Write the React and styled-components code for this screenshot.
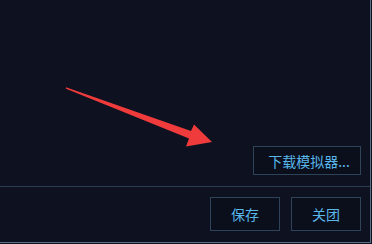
import React from "react";
import styled, { createGlobalStyle } from "styled-components";

const Global = createGlobalStyle`
  html, body { margin: 0; padding: 0; background: #0d1120; }
  #root { width: 372px; height: 244px; }
`;

const Frame = styled.div`
  position: relative;
  width: 371px;
  height: 243px;
  box-sizing: border-box;
  background: #0d1120;
  border-right: 1px solid #5b6d82;
  border-bottom: 1px solid #5b6d82;
  display: flex;
  flex-direction: column;
  font-family: "Noto Sans CJK SC", "Microsoft YaHei", sans-serif;
`;

const Body = styled.div`
  height: 187px;
  box-sizing: border-box;
  display: flex;
  align-items: flex-end;
  justify-content: flex-end;
  padding: 0 9px 11px 0;
  border-bottom: 1px solid #2a3a4f;
`;

const Footer = styled.div`
  flex: 1;
  display: flex;
  justify-content: flex-end;
  align-items: flex-start;
  gap: 11px;
  padding: 10px 9px 0 0;
`;

const Button = styled.button`
  box-sizing: border-box;
  width: ${(p) => p.$w}px;
  height: ${(p) => p.$h}px;
  background: #0b0f1c;
  border: 1px solid #2e4358;
  color: #58b6ea;
  font-family: "Noto Sans CJK SC", sans-serif;
  font-size: 14px;
  line-height: 1;
  padding: ${(p) => (p.$pl ? `0 0 0 ${p.$pl}px` : "0")};
  display: flex;
  align-items: center;
  justify-content: center;
`;

const Arrow = styled.svg`
  position: absolute;
  left: 0;
  top: 0;
  pointer-events: none;
`;

export default function App() {
  return (
    <>
      <Global />
      <Frame>
        <Body>
          <Button $w={108} $h={29} $pl={4}>下载模拟器...</Button>
        </Body>
        <Footer>
          <Button $w={70} $h={34}>保存</Button>
          <Button $w={70} $h={34}>关团</Button>
        </Footer>
        <Arrow width="372" height="244" viewBox="0 0 372 244">
          <polygon
            points="66,87.3 191,131 194,124.5 212,142 186,146.5 189,138.5 66,88.7"
            fill="#ef3b3b"
          />
        </Arrow>
      </Frame>
    </>
  );
}
